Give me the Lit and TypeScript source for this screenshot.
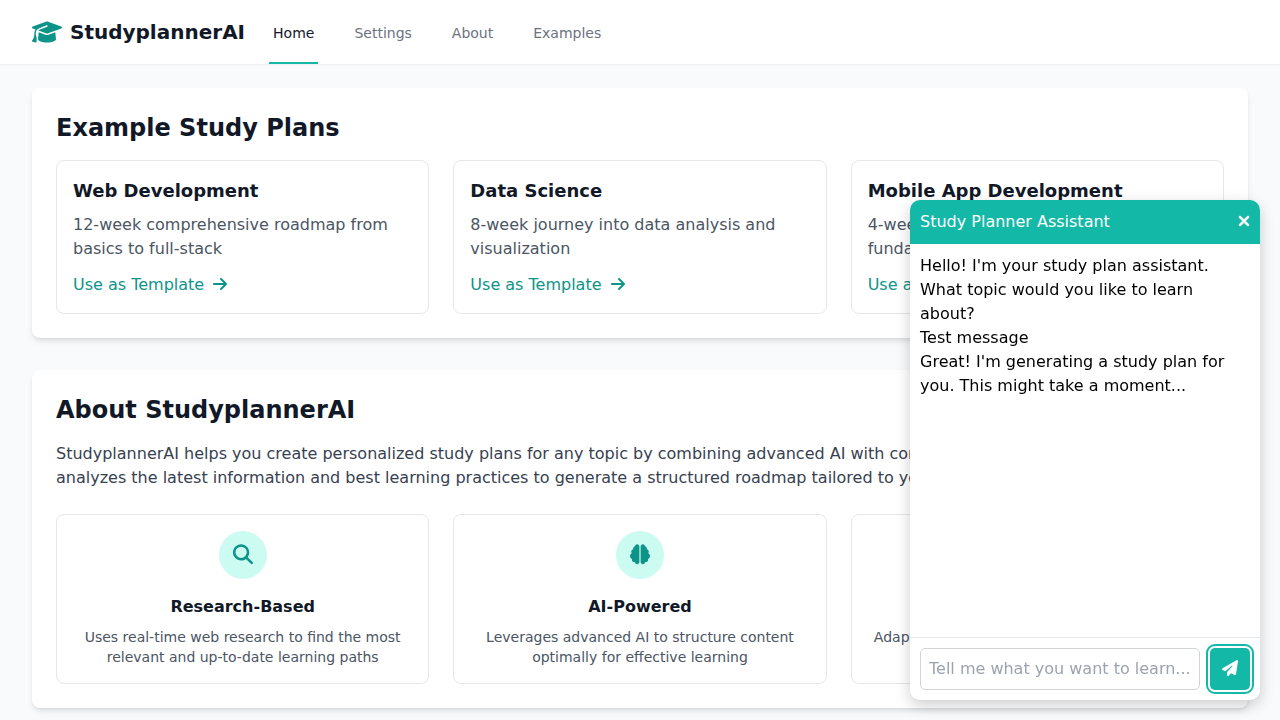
import { LitElement, html, css, svg } from "lit";
import { customElement, property, state } from "lit/decorators.js";
import { classMap } from "lit/directives/class-map.js";

interface Glyph {
  width: number;
  top: number;
  stroke?: number;
  path: string;
}

const glyphs: Record<string, Glyph> = {
  graduation: {
    width: 640,
    top: 0,
    path: "M320 32c-8.1 0-16.1 1.4-23.7 4.1L15.8 137.4C6.3 140.9 0 149.9 0 160s6.3 19.1 15.8 22.6l57.9 20.9C57.3 229.3 48 259.8 48 291.9v28.1c0 28.4-10.8 57.7-22.3 80.8c-6.5 13-13.9 25.8-22.5 37.6C0 442.7-.9 448.3 .9 453.4s6 8.9 11.2 10.2l64 16c4.2 1.1 8.7 .3 12.4-2s6.3-6.1 7.1-10.4c8.6-42.8 4.3-81.2-2.1-108.7C90.3 344.3 86 329.8 80 316.5V291.9c0-30.2 10.2-58.7 27.9-81.5c12.9-15.5 29.6-28 49.2-35.7l157-61.7c8.2-3.2 17.5 .8 20.7 9s-.8 17.5-9 20.7l-157 61.7c-12.4 4.9-23.3 12.4-32.2 21.6l159.6 57.6c7.6 2.7 15.6 4.1 23.7 4.1s16.1-1.4 23.7-4.1L624.2 182.6c9.5-3.4 15.8-12.5 15.8-22.6s-6.3-19.1-15.8-22.6L343.7 36.1C336.1 33.4 328.1 32 320 32zM128 408c0 35.3 86 72 192 72s192-36.7 192-72L496.7 262.6 354.5 314c-11.1 4-22.8 6-34.5 6s-23.5-2-34.5-6L143.3 262.6 128 408z",
  },
  arrow: {
    width: 448,
    top: 32,
    path: "M438.6 278.6c12.5-12.5 12.5-32.8 0-45.3l-160-160c-12.5-12.5-32.8-12.5-45.3 0s-12.5 32.8 0 45.3L338.8 224 32 224c-17.7 0-32 14.3-32 32s14.3 32 32 32l306.7 0L233.4 393.4c-12.5 12.5-12.5 32.8 0 45.3s32.8 12.5 45.3 0l160-160z",
  },
  search: {
    width: 512,
    top: 20,
    path: "M416 208c0 45.9-14.9 88.3-40 122.7L502.6 457.4c12.5 12.5 12.5 32.8 0 45.3s-32.8 12.5-45.3 0L330.7 376c-34.4 25.2-76.8 40-122.7 40C93.1 416 0 322.9 0 208S93.1 0 208 0S416 93.1 416 208zM208 352a144 144 0 1 0 0-288 144 144 0 1 0 0 288z",
  },
  brain: {
    width: 512,
    top: 20,
    path: "M184 0c30.9 0 56 25.1 56 56V456c0 30.9-25.1 56-56 56c-28.9 0-52.7-21.9-55.7-50.1c-5.2 1.4-10.7 2.1-16.3 2.1c-35.3 0-64-28.7-64-64c0-7.4 1.3-14.6 3.6-21.2C21.4 367.4 0 338.2 0 304c0-31.9 18.7-59.5 45.8-72.3C37.1 220.8 32 207 32 192c0-30.7 21.6-56.3 50.4-62.6C80.8 123.9 80 118 80 112c0-29.9 20.6-55.1 48.3-62.1C131.3 21.9 155.1 0 184 0zM328 0c28.9 0 52.6 21.9 55.7 49.9c27.8 7 48.3 32.1 48.3 62.1c0 6-.8 11.9-2.4 17.4c28.8 6.2 50.4 31.9 50.4 62.6c0 15-5.1 28.8-13.8 39.7C493.3 244.5 512 272.1 512 304c0 34.2-21.4 63.4-51.6 74.8c2.3 6.6 3.6 13.8 3.6 21.2c0 35.3-28.7 64-64 64c-5.6 0-11.1-.7-16.3-2.1c-3 28.2-26.8 50.1-55.7 50.1c-30.9 0-56-25.1-56-56V56c0-30.9 25.1-56 56-56z",
  },
  person: {
    width: 448,
    top: 20,
    path: "M224 256A128 128 0 1 0 224 0a128 128 0 1 0 0 256zm-45.7 48C79.8 304 0 383.8 0 482.3C0 498.7 13.3 512 29.7 512H418.3c16.4 0 29.7-13.3 29.7-29.7C448 383.8 368.2 304 269.7 304H178.3z",
  },
  close: {
    width: 384,
    top: 32,
    stroke: 20,
    path: "M342.6 150.6c12.5-12.5 12.5-32.8 0-45.3s-32.8-12.5-45.3 0L192 210.7 86.6 105.4c-12.5-12.5-32.8-12.5-45.3 0s-12.5 32.8 0 45.3L146.7 256 41.4 361.4c-12.5 12.5-12.5 32.8 0 45.3s32.8 12.5 45.3 0L192 301.3 297.4 406.6c12.5 12.5 32.8 12.5 45.3 0s12.5-32.8 0-45.3L237.3 256 342.6 150.6z",
  },
  plane: {
    width: 512,
    top: 32,
    path: "M498.1 5.6c10.1 7 15.4 19.1 13.5 31.2l-64 416c-1.5 9.7-7.4 18.2-16 23s-18.9 5.4-28 1.6L284 427.7l-68.5 74.1c-8.9 9.7-22.9 12.9-35.2 8.1S160 493.2 160 480V396.4c0-4 1.5-7.8 4.2-10.7L331.8 202.8c5.8-6.3 5.6-16-.4-22s-15.7-6.4-22-.7L106 360.8 17.7 316.6C7.1 311.3 .3 300.7 0 288.9s5.9-22.8 16.1-28.7l448-256c10.7-6.1 23.9-5.5 34 1.4z",
  },
};

const icon = (name: string) => html`
  <svg class="icon" viewBox="0 ${glyphs[name].top} ${glyphs[name].width} 512" aria-hidden="true">
    ${svg`<path fill="currentColor" stroke="currentColor" stroke-width=${glyphs[name].stroke ?? 0}
      d=${glyphs[name].path}></path>`}
  </svg>
`;

const base = css`
  *,
  *::before,
  *::after {
    box-sizing: border-box;
  }
  h1, h2, h3, p, ul {
    margin: 0;
    padding: 0;
  }
  ul {
    list-style: none;
  }
  a {
    color: inherit;
    text-decoration: none;
  }
  button, input {
    font: inherit;
    margin: 0;
  }
  .icon {
    display: block;
    height: 1em;
    width: auto;
    flex: none;
    overflow: visible;
  }
`;

const plans = [
  { title: "Web Development", text: "12-week comprehensive roadmap from basics to full-stack" },
  { title: "Data Science", text: "8-week journey into data analysis and visualization" },
  { title: "Mobile App Development", text: "4-week intensive mobile development fundamentals course" },
];

const features = [
  { icon: "search", title: "Research-Based", text: "Uses real-time web research to find the most relevant and up-to-date learning paths" },
  { icon: "brain", title: "AI-Powered", text: "Leverages advanced AI to structure content optimally for effective learning" },
  { icon: "person", title: "Personalized", text: "Adapts to your skill levels and time availability for the best results" },
];

@customElement("site-header")
class SiteHeader extends LitElement {
  @property() current = "Home";

  static styles = [
    base,
    css`
      :host {
        display: block;
        background: #fff;
        box-shadow: 0 1px 2px rgba(0, 0, 0, 0.05);
      }
      .bar {
        display: flex;
        height: 64px;
        max-width: 1280px;
        margin: 0 auto;
        padding: 0 32px;
        gap: 24px;
      }
      .brand {
        display: flex;
        align-items: center;
        gap: 8px;
        font-size: 20px;
        line-height: 28px;
        font-weight: 700;
        color: #111827;
      }
      .mark {
        font-size: 24px;
        color: #0d9488;
      }
      .nav {
        display: flex;
        gap: 32px;
      }
      .link {
        display: flex;
        align-items: center;
        padding: 4px 4px 0;
        border-bottom: 2px solid transparent;
        font-size: 14px;
        line-height: 20px;
        color: #6b7280;
      }
      .link.active {
        border-color: #14b8a6;
        color: #111827;
      }
    `,
  ];

  render() {
    return html`
      <header class="bar">
        <a class="brand" href="#"><span class="mark">${icon("graduation")}</span>StudyplannerAI</a>
        <nav class="nav">
          ${["Home", "Settings", "About", "Examples"].map(
            (name) => html`<a class=${classMap({ link: true, active: name === this.current })}
              href="#${name.toLowerCase()}">${name}</a>`
          )}
        </nav>
      </header>
    `;
  }
}

@customElement("chat-assistant")
class ChatAssistant extends LitElement {
  @state() private messages = [
    "Hello! I'm your study plan assistant. What topic would you like to learn about?",
    "Test message",
    "Great! I'm generating a study plan for you. This might take a moment...",
  ];

  static styles = [
    base,
    css`
      :host {
        position: fixed;
        right: 20px;
        bottom: 20px;
        z-index: 10;
        display: flex;
        flex-direction: column;
        width: 350px;
        height: 500px;
        max-width: calc(100% - 40px);
        max-height: calc(100% - 40px);
        overflow: hidden;
        border-radius: 10px;
        background: #fff;
        color: #000;
        box-shadow: 0 5px 15px rgba(0, 0, 0, 0.2);
      }
      .title {
        display: flex;
        align-items: center;
        justify-content: space-between;
        padding: 10px;
        background: #14b8a6;
        color: #fff;
      }
      .name {
        font-size: 16px;
        font-weight: 400;
      }
      .close {
        padding: 0;
        border: 0;
        background: none;
        color: #fff;
        cursor: pointer;
      }
      .messages {
        flex: 1;
        overflow-y: auto;
        padding: 10px;
      }
      .form {
        display: flex;
        gap: 10px;
        padding: 10px;
        border-top: 1px solid #e5e7eb;
      }
      .label {
        position: absolute;
        width: 1px;
        height: 1px;
        overflow: hidden;
        clip-path: inset(50%);
      }
      .field {
        flex: 1;
        min-width: 0;
        padding: 8px;
        border: 1px solid #d1d5db;
        border-radius: 5px;
        line-height: 24px;
        background: #fff;
        color: #000;
      }
      .field::placeholder {
        color: #9ca3af;
        opacity: 1;
      }
      .send {
        display: flex;
        align-items: center;
        padding: 8px 12px;
        border: 0;
        border-radius: 5px;
        background: #14b8a6;
        color: #fff;
        box-shadow: 0 0 0 2px #fff, 0 0 0 4px #14b8a6;
        cursor: pointer;
      }
    `,
  ];

  private submit(event: Event) {
    event.preventDefault();
    const field = this.renderRoot.querySelector("input") as HTMLInputElement;
    if (field.value.trim()) {
      this.messages = [...this.messages, field.value.trim()];
      field.value = "";
    }
  }

  render() {
    return html`
      <div class="title">
        <h2 class="name">Study Planner Assistant</h2>
        <button class="close" type="button" aria-label="Close" @click=${() => this.remove()}>${icon("close")}</button>
      </div>
      <div class="messages">${this.messages.map((text) => html`<p>${text}</p>`)}</div>
      <form class="form" @submit=${this.submit}>
        <label class="label" for="topic">Message</label>
        <input class="field" id="topic" type="text" placeholder="Tell me what you want to learn..." />
        <button class="send" type="submit" aria-label="Send">${icon("plane")}</button>
      </form>
    `;
  }
}

@customElement("app-root")
class AppRoot extends LitElement {
  static styles = [
    base,
    css`
      :host {
        display: block;
        min-height: 100vh;
        background: #f9fafb;
        font-family: "DejaVu Sans", sans-serif;
        font-size: 16px;
        line-height: 24px;
      }
      .page {
        display: grid;
        gap: 32px;
        max-width: 1280px;
        margin: 0 auto;
        padding: 24px 32px;
      }
      .panel {
        padding: 24px;
        border-radius: 8px;
        background: #fff;
        box-shadow: 0 4px 6px -1px rgba(0, 0, 0, 0.1), 0 2px 4px -2px rgba(0, 0, 0, 0.1);
      }
      .heading {
        margin-bottom: 16px;
        font-size: 24px;
        line-height: 32px;
        font-weight: 700;
        color: #111827;
      }
      .intro {
        margin-bottom: 24px;
        color: #374151;
      }
      .cards {
        display: grid;
        grid-template-columns: repeat(3, minmax(0, 1fr));
        gap: 24px;
      }
      .card {
        padding: 16px;
        border: 1px solid #e5e7eb;
        border-radius: 8px;
        color: #4b5563;
      }
      .plan-title {
        margin-bottom: 8px;
        font-size: 18px;
        line-height: 28px;
        font-weight: 700;
        color: #111827;
      }
      .template {
        display: flex;
        align-items: center;
        gap: 9px;
        width: max-content;
        margin-top: 12px;
        padding: 0;
        border: 0;
        background: none;
        line-height: 24px;
        color: #0d9488;
        cursor: pointer;
      }
      .feature {
        display: flex;
        flex-direction: column;
        align-items: center;
        text-align: center;
      }
      .badge {
        display: flex;
        align-items: center;
        justify-content: center;
        width: 48px;
        height: 48px;
        margin-bottom: 16px;
        border-radius: 50%;
        background: #ccfbf1;
        font-size: 20px;
        color: #0d9488;
      }
      .feature-title {
        margin-bottom: 8px;
        font-size: 16px;
        font-weight: 700;
        color: #111827;
      }
      .feature-text {
        font-size: 14px;
        line-height: 20px;
      }
    `,
  ];

  render() {
    return html`
      <site-header></site-header>
      <main class="page">
        <section class="panel" id="examples">
          <h2 class="heading">Example Study Plans</h2>
          <div class="cards">
            ${plans.map(
              (plan) => html`
                <article class="card">
                  <h3 class="plan-title">${plan.title}</h3>
                  <p>${plan.text}</p>
                  <button class="template" type="button">Use as Template ${icon("arrow")}</button>
                </article>
              `
            )}
          </div>
        </section>
        <section class="panel" id="about">
          <h2 class="heading">About StudyplannerAI</h2>
          <p class="intro">
            StudyplannerAI helps you create personalized study plans for any topic by combining advanced AI with
            comprehensive web research. Our tool analyzes the latest information and best learning practices to
            generate a structured roadmap tailored to your needs.
          </p>
          <div class="cards">
            ${features.map(
              (feature) => html`
                <article class="card feature">
                  <div class="badge">${icon(feature.icon)}</div>
                  <h3 class="feature-title">${feature.title}</h3>
                  <p class="feature-text">${feature.text}</p>
                </article>
              `
            )}
          </div>
        </section>
      </main>
      <chat-assistant></chat-assistant>
    `;
  }
}
